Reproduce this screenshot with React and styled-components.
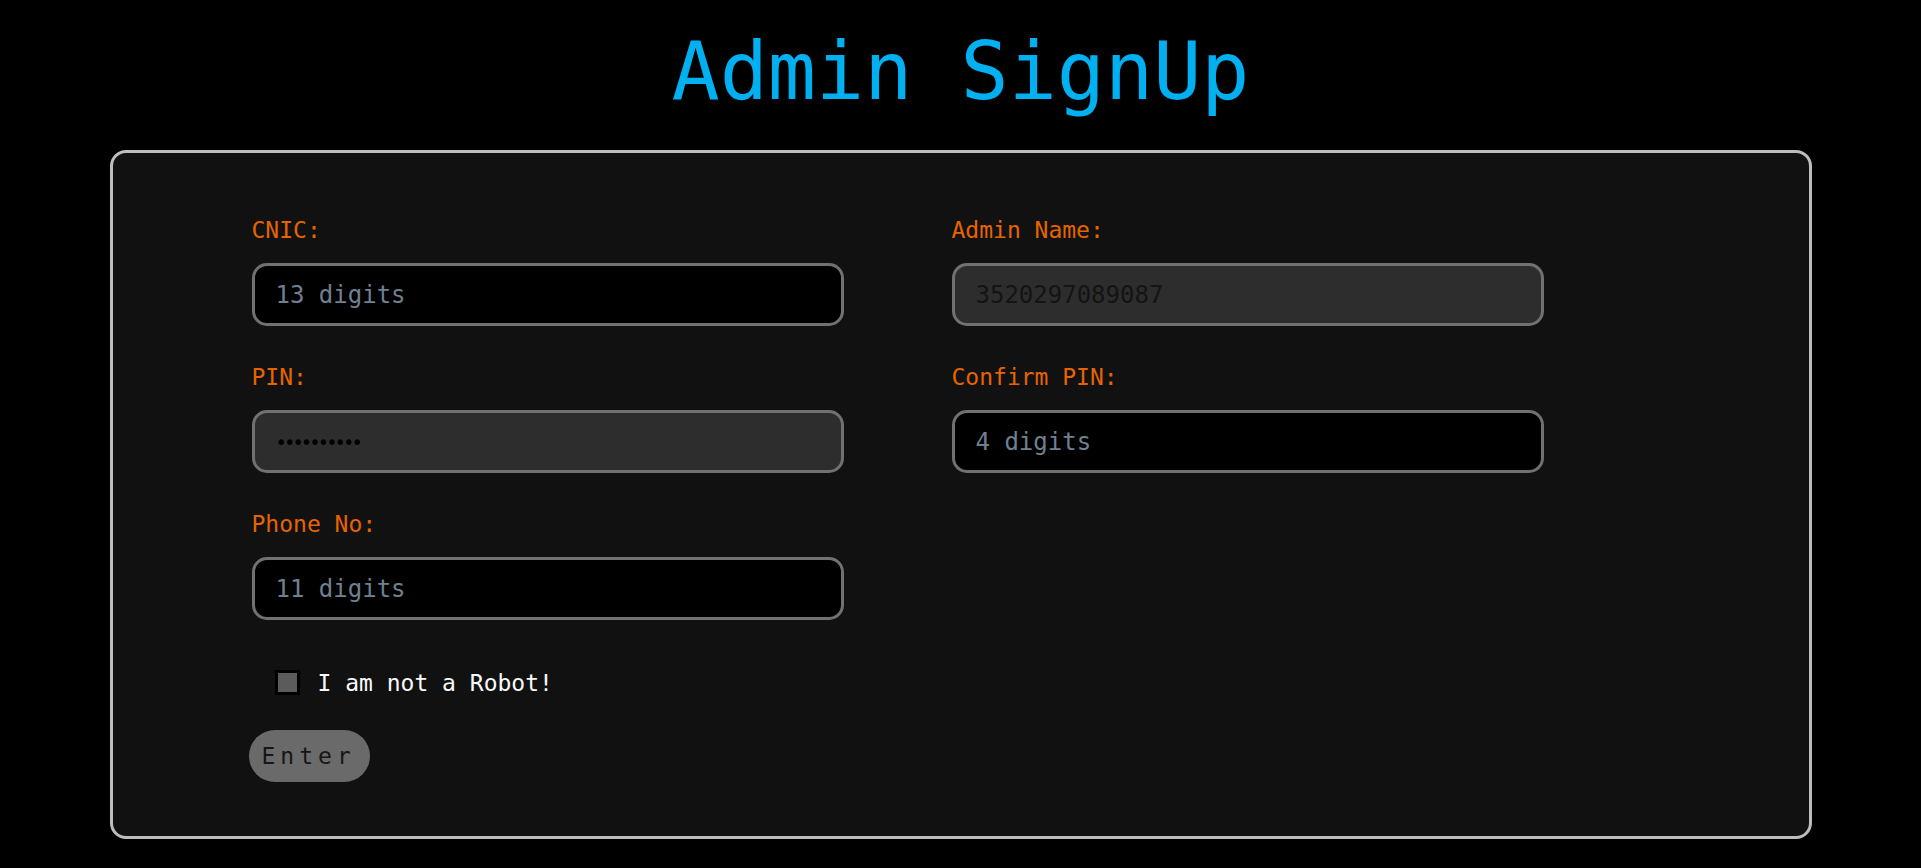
import React from 'react'
import styled, { createGlobalStyle } from 'styled-components'

const GlobalStyle = createGlobalStyle`
  html, body {
    margin: 0;
    padding: 0;
    background: #000;
  }
  body {
    font-family: "DejaVu Sans Mono", "Liberation Mono", monospace;
  }
`

function App() {
  return (
    <>
      <GlobalStyle />
      <Page>
        <Title>Admin SignUp</Title>
        <Card>
          <FormGrid>
            <Field>
              <Label>CNIC:</Label>
              <Input type="text" placeholder="13 digits" />
            </Field>
            <Field>
              <Label>Admin Name:</Label>
              <Input type="text" defaultValue="3520297089087" readOnly $filled />
            </Field>
            <Field>
              <Label>PIN:</Label>
              <Input type="password" defaultValue="1234567890" readOnly $filled $secret />
            </Field>
            <Field>
              <Label>Confirm PIN:</Label>
              <Input type="password" placeholder="4 digits" />
            </Field>
            <Field>
              <Label>Phone No:</Label>
              <Input type="text" placeholder="11 digits" />
            </Field>
          </FormGrid>
          <CheckRow>
            <CheckBox type="checkbox" />
            <CheckText>I am not a Robot!</CheckText>
          </CheckRow>
          <EnterButton type="button">Enter</EnterButton>
        </Card>
      </Page>
    </>
  )
}

export default App

const Page = styled.div`
  padding-top: 32px;
  display: flex;
  flex-direction: column;
  align-items: center;
`

const Title = styled.h1`
  margin: 0;
  font-size: 80px;
  line-height: 80px;
  font-weight: 400;
  color: #00b0f0;
  text-align: center;
`

const Card = styled.div`
  box-sizing: border-box;
  width: 1702px;
  height: 689px;
  margin-top: 38px;
  padding: 63px 0 0 139px;
  background: #111;
  border: 3px solid #bdbdbd;
  border-radius: 16px;
`

const FormGrid = styled.div`
  display: grid;
  grid-template-columns: 592px 592px;
  column-gap: 108px;
  row-gap: 37px;
`

const Field = styled.div`
  display: flex;
  flex-direction: column;
  gap: 19px;
`

const Label = styled.label`
  display: block;
  font-size: 23px;
  line-height: 28px;
  color: #e66400;
`

const Input = styled.input`
  box-sizing: border-box;
  width: 592px;
  height: 63px;
  padding: 0 21px;
  border: 3px solid #717171;
  border-radius: 15px;
  outline: none;
  background: ${p => (p.$filled ? '#2d2d2d' : '#000')};
  color: ${p => (p.$secret ? '#000' : '#141414')};
  font-family: "DejaVu Sans Mono", monospace;
  font-size: ${p => (p.$secret ? '19px' : '24px')};
  letter-spacing: ${p => (p.$secret ? '-3px' : 'normal')};

  &::placeholder {
    color: #708090;
    letter-spacing: normal;
  }
`

const CheckRow = styled.div`
  display: flex;
  align-items: center;
  gap: 18px;
  margin: 50px 0 0 23px;
  height: 25px;
`

const CheckBox = styled.input`
  appearance: none;
  box-sizing: border-box;
  margin: 0;
  width: 25px;
  height: 25px;
  border: 3px solid #000;
  background: #5b5b5b;
`

const CheckText = styled.span`
  font-size: 23px;
  color: #fafafa;
`

const EnterButton = styled.button`
  display: block;
  box-sizing: border-box;
  margin: 35px 0 0 -3px;
  width: 121px;
  height: 52px;
  padding: 0 0 0 13px;
  border: none;
  border-radius: 26px;
  background: #6a6a6a;
  color: #161616;
  font-family: "DejaVu Sans Mono", monospace;
  font-size: 23px;
  letter-spacing: 5px;
  text-align: left;
`
